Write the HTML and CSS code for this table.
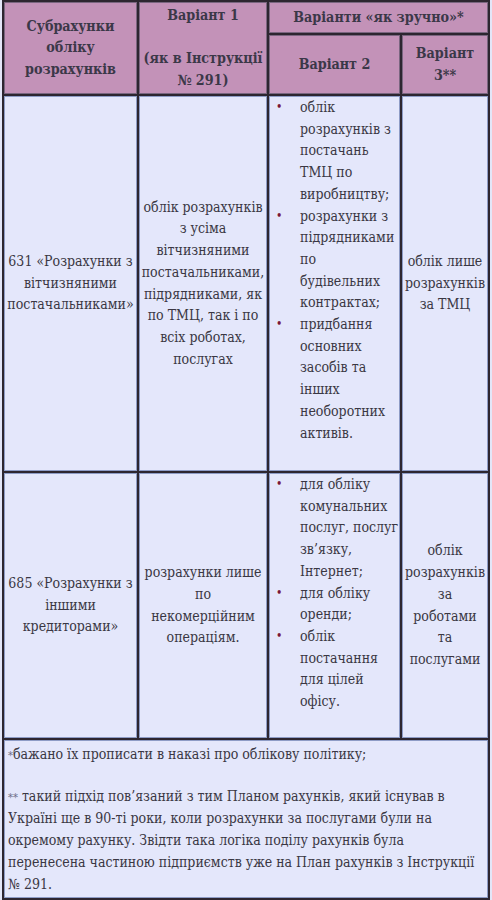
FILE: index.html
```html
<!DOCTYPE html>
<html lang="uk">
<head>
<meta charset="utf-8">
<title>Субрахунки обліку розрахунків</title>
<link rel="stylesheet" href="styles.css">
</head>
<body>
<table class="grid">
  <colgroup>
    <col class="c1"><col class="c2"><col class="c3"><col class="c4">
  </colgroup>
  <thead>
    <tr class="h1">
      <th rowspan="2">Субрахунки обліку розрахунків</th>
      <th rowspan="2"><p class="gap">Варіант 1</p><p>(як в Інструкції № 291)</p></th>
      <th colspan="2">Варіанти «як зручно»*</th>
    </tr>
    <tr class="h2">
      <th>Варіант 2</th>
      <th>Варіант 3**</th>
    </tr>
  </thead>
  <tbody>
    <tr class="b1">
      <td>631 «Розрахунки з вітчизняними постачальниками»</td>
      <td>облік розрахунків з усіма вітчизняними постачальниками, підрядниками, як по ТМЦ, так і по всіх роботах, послугах</td>
      <td class="list">
        <ul>
          <li><span>облік розрахунків з постачань ТМЦ по виробництву;</span></li>
          <li><span>розрахунки з підрядниками по будівельних контрактах;</span></li>
          <li><span>придбання основних засобів та інших необоротних активів.</span></li>
        </ul>
      </td>
      <td class="side">облік лише розрахунків за ТМЦ</td>
    </tr>
    <tr class="b2">
      <td>685 «Розрахунки з іншими кредиторами»</td>
      <td class="narrow">розрахунки лише по некомерційним операціям.</td>
      <td class="list">
        <ul>
          <li><span>для обліку комунальних послуг, послуг зв’язку, Інтернет;</span></li>
          <li><span>для обліку оренди;</span></li>
          <li><span>облік постачання для цілей офісу.</span></li>
        </ul>
      </td>
      <td class="side">облік розрахунків за роботами та послугами</td>
    </tr>
    <tr>
      <td colspan="4" class="note">
        <p class="first"><span class="star">*</span>бажано їх прописати в наказі про облікову політику;</p>
        <p><span class="star">**</span> такий підхід пов’язаний з тим Планом рахунків, який існував в Україні ще в 90-ті роки, коли розрахунки за послугами були на окремому рахунку. Звідти така логіка поділу рахунків була перенесена частиною підприємств уже на План рахунків з Інструкції № 291.</p>
      </td>
    </tr>
  </tbody>
</table>
</body>
</html>
```

FILE: styles.css
```css
html, body {
  margin: 0;
  padding: 0;
  background: #e3e6f8;
}

body {
  font-family: "DejaVu Serif", "Liberation Serif", serif;
  font-stretch: condensed;
  font-size: 14px;
  color: #3a3743;
}

.grid {
  width: 488px;
  margin-left: 2px;
  table-layout: fixed;
  border-collapse: separate;
  border-spacing: 2px;
  background: #2d2630;
}

.c1 { width: 133px; }
.c2 { width: 128px; }
.c3 { width: 131px; }
.c4 { width: 86px; }

.grid th {
  background: #c392b8;
  border: 1px solid #7a6680;
  padding: 0;
  font-weight: bold;
  font-size: 14.2px;
  line-height: 21.5px;
  color: #3b3848;
  text-align: center;
  vertical-align: middle;
}

.grid th p {
  margin: 0;
}

.grid th p.gap {
  margin-bottom: 22px;
}

.h1 { height: 31px; }
.h2 { height: 59px; }
.b1 { height: 375px; }
.b2 { height: 265px; }

.grid td {
  background: #e4e7fb;
  border: 1px solid #8e9cc6;
  padding: 0;
  line-height: 21.7px;
  text-align: center;
  vertical-align: middle;
}

.grid td.side {
  padding: 0 2px;
}

.grid td.narrow {
  padding: 0 3px;
}

.grid td.list {
  text-align: left;
  vertical-align: top;
}

.list ul {
  margin: 0;
  padding: 0;
  list-style: none;
}

.list li {
  display: grid;
  grid-template-columns: 30px 1fr;
}

.list li::before {
  content: "•";
  color: #7a1738;
  font-size: 12px;
  padding-left: 6px;
}

.grid td.note {
  text-align: left;
  vertical-align: top;
  padding: 3px 3px 2px;
}

.note p {
  margin: 0;
}

.note p.first {
  margin-bottom: 19px;
}

.star {
  color: #6d7088;
  font-size: 11px;
}
```
